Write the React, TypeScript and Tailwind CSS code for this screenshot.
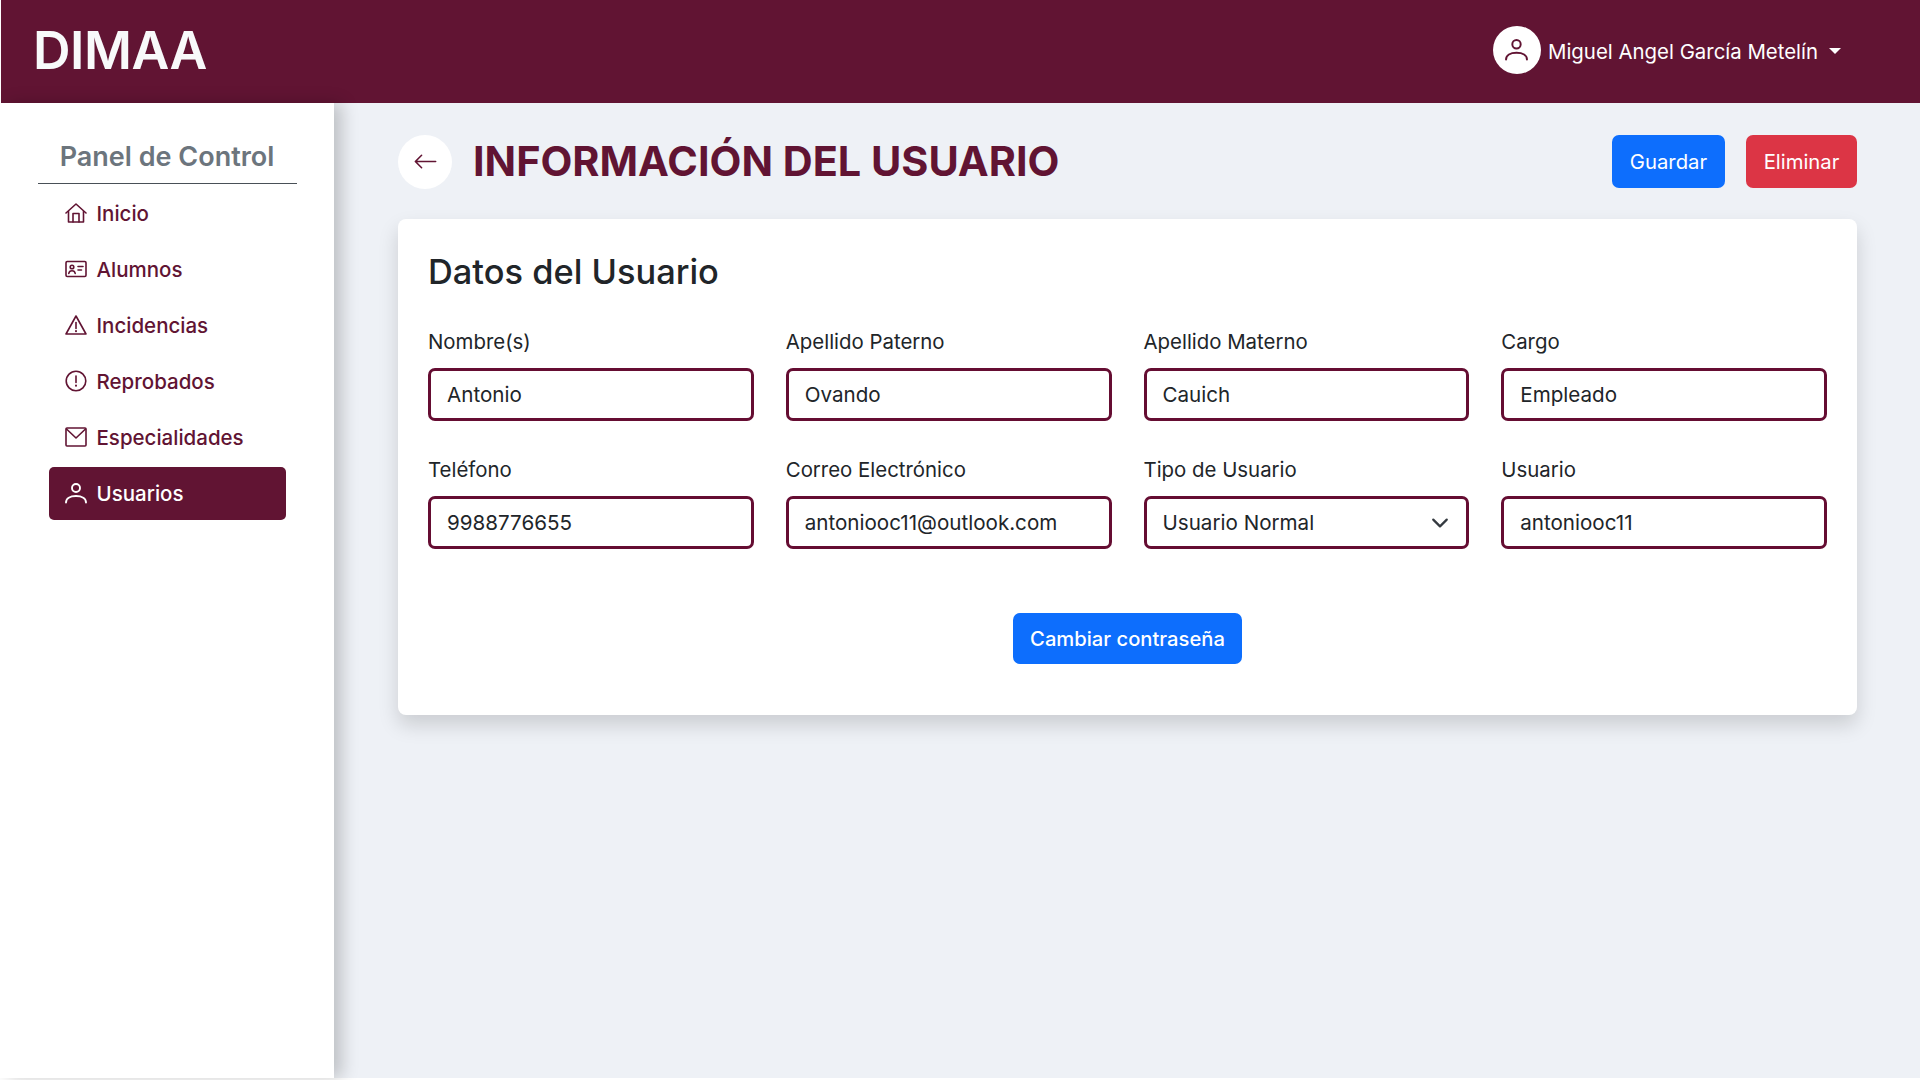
import { BsArrowLeft } from "react-icons/bs";

const stroke = { fill: "none", stroke: "currentColor", strokeWidth: 1.6, strokeLinecap: "round" as const, strokeLinejoin: "round" as const };

function HomeIcon() {
  return (
    <svg viewBox="0 0 22 22" className="w-[22px] h-[22px]" {...stroke}>
      <path d="M1 11 11 2l10 9" />
      <path d="M3.5 9.5V20h15V9.5" />
      <path d="M8 20v-8.5h6V20" />
    </svg>
  );
}
function CardIcon() {
  return (
    <svg viewBox="0 0 22 22" className="w-[22px] h-[22px]" {...stroke}>
      <rect x="1" y="3.5" width="20" height="15" rx="1.2" />
      <circle cx="7" cy="9" r="1.8" />
      <path d="M3.8 15.500c.3-2 1.600-2.800 3.200-2.800s2.900.8 3.200 2.800" />
      <path d="M13 8.500h5M13 12h3.500" />
    </svg>
  );
}
function WarnIcon() {
  return (
    <svg viewBox="0 0 22 22" className="w-[22px] h-[22px]" {...stroke}>
      <path d="M11 2 1 20h20z" />
      <path d="M11 8.500v6" />
      <path d="M11 17v.2" strokeWidth="2" />
    </svg>
  );
}
function AlertIcon() {
  return (
    <svg viewBox="0 0 22 22" className="w-[22px] h-[22px]" {...stroke}>
      <circle cx="11" cy="11" r="9.800" />
      <path d="M11 6v6.500" />
      <path d="M11 15.600v.2" strokeWidth="2" />
    </svg>
  );
}
function MailIcon() {
  return (
    <svg viewBox="0 0 22 22" className="w-[22px] h-[22px]" {...stroke}>
      <rect x="1" y="2" width="20" height="18" rx="1" />
      <path d="M1.500 3 11 12l9.500-9" />
    </svg>
  );
}
function UserIcon({ className }: { className: string }) {
  return (
    <svg viewBox="0 0 22 22" className={className} fill="none" stroke="currentColor" strokeWidth="1.9" strokeLinecap="round">
      <circle cx="11" cy="6" r="4" />
      <path d="M1 20.500c0-4 4-6.500 10-6.500s10 2.500 10 6.500" />
    </svg>
  );
}

const nav = [
  { label: "Inicio", icon: <HomeIcon /> },
  { label: "Alumnos", icon: <CardIcon /> },
  { label: "Incidencias", icon: <WarnIcon /> },
  { label: "Reprobados", icon: <AlertIcon /> },
  { label: "Especialidades", icon: <MailIcon /> },
  { label: "Usuarios", icon: <UserIcon className="w-[22px] h-[22px]" />, active: true },
];

const fields = [
  { label: "Nombre(s)", value: "Antonio" },
  { label: "Apellido Paterno", value: "Ovando" },
  { label: "Apellido Materno", value: "Cauich" },
  { label: "Cargo", value: "Empleado" },
  { label: "Teléfono", value: "9988776655" },
  { label: "Correo Electrónico", value: "antoniooc11@outlook.com" },
  { label: "Tipo de Usuario", value: "Usuario Normal", select: true },
  { label: "Usuario", value: "antoniooc11" },
];

function Field({ label, value, select }: { label: string; value: string; select?: boolean }) {
  return (
    <div className="flex flex-col">
      <div className="h-[26px] mb-[13px] text-[20.4px] leading-[26px] text-[#212529]">{label}</div>
      <div className="h-[53px] rounded-[7px] border-[3px] border-[#650d32] bg-white flex items-center justify-between pl-[16px] pr-[17px] text-[20.6px] text-[#212529]">
        <span className="pt-[2px]">{value}</span>
        {select && (
          <svg viewBox="0 0 16 16" className="w-[18px] h-[18px]" fill="none" stroke="#343a40" strokeWidth="2" strokeLinecap="round" strokeLinejoin="round">
            <path d="m2 5 6 6 6-6" />
          </svg>
        )}
      </div>
    </div>
  );
}

export default function App() {
  return (
    <div className="w-[1920px] h-[1080px] overflow-hidden bg-white font-['Inter','Liberation_Sans',sans-serif]">
      <div className="h-[1078px] flex flex-col">
        <header className="h-[103px] ml-[1px] bg-[#611433] shrink-0 flex items-center justify-between pl-[32px] pr-[79px]">
          <div className="text-[52px] font-semibold tracking-[-0.5px] text-[#f8f9fa] pb-[2px]">DIMAA</div>
          <div className="flex items-center text-white text-[20.4px] pb-[4px]">
            <div className="w-[48px] h-[48px] rounded-full bg-white flex items-center justify-center text-[#611433] mr-[7px]">
              <UserIcon className="w-[23px] h-[23px]" />
            </div>
            <span className="pt-[5px]">Miguel Angel García Metelín</span>
            <span className="ml-[11px] mt-[3px] w-0 h-0 border-x-[6.5px] border-x-transparent border-t-[6.5px] border-t-white" />
          </div>
        </header>
        <div className="flex-1 flex min-h-0">
          <aside className="w-[334px] shrink-0 bg-white relative z-10 shadow-[8px_0_16px_rgba(0,0,0,0.2)] flex flex-col items-center pt-[26px]">
            <div className="w-[259px] h-[55px] border-b border-[#495057] text-center text-[27px] leading-[56px] font-semibold text-[#6c757d]">Panel de Control</div>
            <nav className="w-[237px] mt-[3px] flex flex-col">
              {nav.map(({ label, icon, active }) => (
                <div key={label} className={`h-[53px] mb-[3px] rounded-[5px] flex items-center pl-[16px] text-[20.5px] font-medium ${active ? "bg-[#611433] text-white" : "text-[#611433]"}`}>
                  <span className="shrink-0 mr-[10px] mb-[2px]">{icon}</span>
                  <span className="pt-[2px]">{label}</span>
                </div>
              ))}
            </nav>
          </aside>
          <main className="flex-1 bg-[#eef1f6] pl-[64px] pr-[63px] pt-[32px]">
            <div className="h-[53px] flex items-center">
              <div className="w-[54px] h-[54px] rounded-full bg-white flex items-center justify-center text-[#611433] mr-[21px]">
                <BsArrowLeft className="text-[25px]" />
              </div>
              <h1 className="text-[41.4px] font-bold text-[#611433] flex-1">INFORMACIÓN DEL USUARIO</h1>
              <button className="h-[53px] w-[113px] pt-[2px] rounded-[7px] bg-[#0d6efd] text-white text-[20.3px] mr-[21px]">Guardar</button>
              <button className="h-[53px] w-[111px] pt-[2px] rounded-[7px] bg-[#dc3545] text-white text-[20.3px]">Eliminar</button>
            </div>
            <section className="mt-[31px] h-[496px] bg-white rounded-[8px] shadow-[0_10px_20px_rgba(0,0,0,0.15)] px-[30px] pt-[30px]">
              <h2 className="text-[34.4px] leading-[46px] font-medium text-[#212529] mb-[34px]">Datos del Usuario</h2>
              <div className="grid grid-cols-4 gap-x-[32px] gap-y-[36px]">
                {fields.map((f) => (
                  <Field key={f.label} {...f} />
                ))}
              </div>
              <div className="flex justify-center mt-[64px]">
                <button className="h-[51px] w-[229px] pt-[2px] rounded-[7px] bg-[#0d6efd] text-white text-[20.2px] font-medium">Cambiar contraseña</button>
              </div>
            </section>
          </main>
        </div>
      </div>
    </div>
  );
}
